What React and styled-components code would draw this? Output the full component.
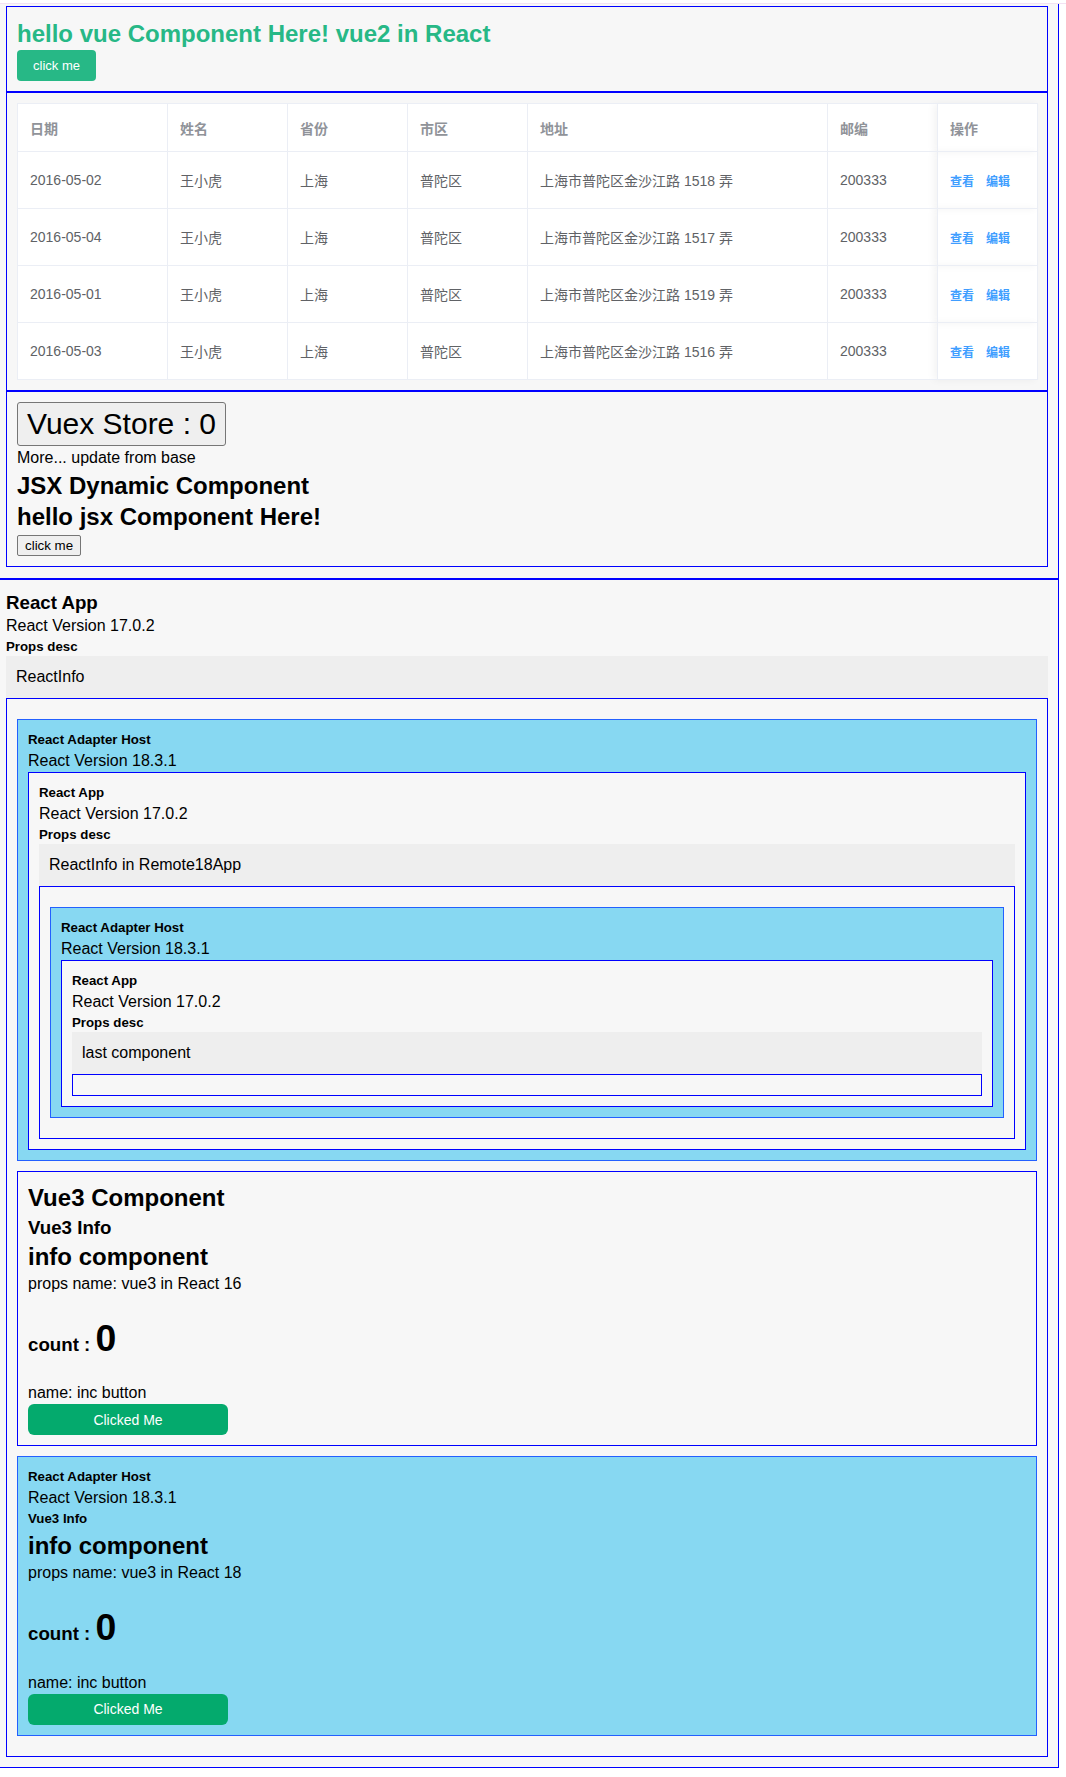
import styled, { createGlobalStyle } from "styled-components";

const GlobalStyle = createGlobalStyle`
  body {
    margin: 0;
    background: #fff;
    color: #000;
    font-family: "Liberation Sans", "Noto Sans CJK SC", sans-serif;
  }
`;

const Page = styled.div`
  margin-top: 3px;
  border-top: 1px solid #f3e2f3;
`;

const Section = styled.div`
  box-sizing: border-box;
  width: 1059px;
  background: #f7f7f7;
  border-right: 1px solid blue;
  border-bottom: 1px solid blue;
  padding: 2px 10px 11px 6px;
`;

const HostSection = styled(Section)`
  border-top: 1px solid blue;
  padding: 12px 10px 10px 6px;
`;

const Panel = styled.div`
  border: 1px solid blue;
  padding: 10px;
`;

const HeaderPanel = styled(Panel)`
  padding-top: 13px;
`;

const VueTitle = styled.h2`
  margin: 0;
  font-size: 24px;
  line-height: 28px;
  color: #27b886;
`;

const VueButton = styled.button`
  display: block;
  margin-top: 2px;
  height: 31px;
  padding: 0 16px;
  border: none;
  border-radius: 4px;
  background: #27b886;
  color: #fff;
  font: 13px "Liberation Sans", sans-serif;
`;

const Table = styled.table`
  width: 1020px;
  table-layout: fixed;
  border-collapse: collapse;
  background: #fff;
  font-size: 14px;
`;

const Th = styled.th`
  height: 47px;
  padding: 0 12px;
  border: 1px solid #ebeef5;
  text-align: left;
  color: #909399;
  font-weight: 600;
  ${(p) => p.$fixed && "box-shadow: -4px 0 8px rgba(0, 0, 0, 0.05);"}
`;

const Td = styled.td`
  height: 56px;
  padding: 0 12px;
  border: 1px solid #ebeef5;
  color: #606266;
  white-space: nowrap;
  ${(p) => p.$fixed && "box-shadow: -4px 0 8px rgba(0, 0, 0, 0.05);"}
`;

const LinkButton = styled.button`
  padding: 0;
  margin-right: 12px;
  border: none;
  background: none;
  color: #409eff;
  font: 600 12px "Liberation Sans", "Noto Sans CJK SC", sans-serif;
  cursor: pointer;
`;

const StoreButton = styled.button`
  display: block;
  padding: 4px 9px;
  border: 1px solid #767676;
  border-radius: 3px;
  background: #efefef;
  font: 30px "Liberation Sans", sans-serif;
`;

const Line = styled.div`
  font-size: 16px;
  line-height: ${(p) => p.$lh || 23}px;
`;

const JsxTitle = styled.h2`
  margin: 0;
  font-size: 24px;
  line-height: 31px;
`;

const PlainButton = styled.button`
  display: block;
  margin-top: 3px;
  height: 21px;
  padding: 0 7px;
  border: 1px solid #767676;
  border-radius: 2px;
  background: #efefef;
  font: 13.33px "Liberation Sans", sans-serif;
`;

const AppTitle = styled.h3`
  margin: 0;
  font-size: 18.72px;
  line-height: 22px;
`;

const SmallTitle = styled.h5`
  margin: 0;
  font-size: 13.28px;
  line-height: 19px;
`;

const InfoBar = styled.div`
  display: flex;
  align-items: center;
  height: 42px;
  padding: 0 10px;
  background: #eeeeee;
  font-size: 16px;
`;

const AdapterHost = styled.div`
  margin: 10px 0;
  padding: 10px;
  background: #87d8f2;
  border: 1px solid #2360ff;
`;

const RemoteApp = styled.div`
  padding: 10px;
  background: #f7f7f7;
  border: 1px solid blue;
`;

const Vue3Card = styled(RemoteApp)`
  margin: 10px 0;
`;

const Heading2 = styled.h2`
  margin: ${(p) => p.$top || 0}px 0 0;
  font-size: 24px;
  line-height: 28px;
`;

const Heading3 = styled.h3`
  margin: 5px 0 0;
  font-size: 18.72px;
  line-height: 22px;
`;

const CountLine = styled.h3`
  margin: 25px 0 0;
  font-size: 18.72px;
  line-height: 22px;
`;

const BigNumber = styled.span`
  font-size: 2em;
  line-height: 1;
`;

const NameLine = styled.p`
  margin: 25px 0 0;
  font-size: 16px;
  line-height: 22px;
`;

const PropsLine = styled.p`
  margin: 2px 0 0;
  font-size: 16px;
  line-height: 22px;
`;

const GreenButton = styled.button`
  display: block;
  width: 200px;
  height: 31px;
  border: none;
  border-radius: 6px;
  background: #04aa6d;
  color: #fff;
  font: 500 14px "Liberation Sans", sans-serif;
`;

const columns = [
  { key: "date", label: "日期", width: 150 },
  { key: "name", label: "姓名", width: 120 },
  { key: "province", label: "省份", width: 120 },
  { key: "city", label: "市区", width: 120 },
  { key: "address", label: "地址", width: 300 },
  { key: "zip", label: "邮编", width: 110 },
];

const rows = [
  { date: "2016-05-02", lane: 1518 },
  { date: "2016-05-04", lane: 1517 },
  { date: "2016-05-01", lane: 1519 },
  { date: "2016-05-03", lane: 1516 },
].map((r) => ({
  date: r.date,
  name: "王小虎",
  province: "上海",
  city: "普陀区",
  address: `上海市普陀区金沙江路 ${r.lane} 弄`,
  zip: "200333",
}));

const VueInfo = ({ name }) => (
  <>
    <Heading2 $top={4}>info component</Heading2>
    <PropsLine>props name: {name}</PropsLine>
    <CountLine>
      count : <BigNumber>0</BigNumber>
    </CountLine>
    <NameLine>name: inc button</NameLine>
    <GreenButton>Clicked Me</GreenButton>
  </>
);

const NestedApp = ({ depth }) => (
  <AdapterHost>
    <SmallTitle>React Adapter Host</SmallTitle>
    <Line>React Version 18.3.1</Line>
    <RemoteApp>
      <SmallTitle>React App</SmallTitle>
      <Line>React Version 17.0.2</Line>
      <SmallTitle>Props desc</SmallTitle>
      <InfoBar>{depth > 1 ? "ReactInfo in Remote18App" : "last component"}</InfoBar>
      <Panel>{depth > 1 && <NestedApp depth={depth - 1} />}</Panel>
    </RemoteApp>
  </AdapterHost>
);

const App = () => {
  return (
    <Page>
      <GlobalStyle />
      <Section>
        <HeaderPanel>
          <VueTitle>hello vue Component Here! vue2 in React</VueTitle>
          <VueButton>click me</VueButton>
        </HeaderPanel>
        <Panel>
          <Table>
            <colgroup>
              {columns.map((c) => (
                <col key={c.key} style={{ width: c.width }} />
              ))}
              <col style={{ width: 100 }} />
            </colgroup>
            <thead>
              <tr>
                {columns.map((c) => (
                  <Th key={c.key}>{c.label}</Th>
                ))}
                <Th $fixed>操作</Th>
              </tr>
            </thead>
            <tbody>
              {rows.map((r) => (
                <tr key={r.date}>
                  {columns.map((c) => (
                    <Td key={c.key}>{r[c.key]}</Td>
                  ))}
                  <Td $fixed>
                    <LinkButton>查看</LinkButton>
                    <LinkButton>编辑</LinkButton>
                  </Td>
                </tr>
              ))}
            </tbody>
          </Table>
        </Panel>
        <Panel>
          <StoreButton>Vuex Store : 0</StoreButton>
          <Line $lh={24}>More... update from base</Line>
          <JsxTitle>JSX Dynamic Component</JsxTitle>
          <JsxTitle>hello jsx Component Here!</JsxTitle>
          <PlainButton>click me</PlainButton>
        </Panel>
      </Section>
      <HostSection>
        <AppTitle>React App</AppTitle>
        <Line>React Version 17.0.2</Line>
        <SmallTitle>Props desc</SmallTitle>
        <InfoBar>ReactInfo</InfoBar>
        <Panel>
          <NestedApp depth={2} />
          <Vue3Card>
            <Heading2 $top={2}>Vue3 Component</Heading2>
            <Heading3>Vue3 Info</Heading3>
            <VueInfo name="vue3 in React 16" />
          </Vue3Card>
          <AdapterHost>
            <SmallTitle>React Adapter Host</SmallTitle>
            <Line>React Version 18.3.1</Line>
            <SmallTitle>Vue3 Info</SmallTitle>
            <VueInfo name="vue3 in React 18" />
          </AdapterHost>
        </Panel>
      </HostSection>
    </Page>
  );
};

export default App;
